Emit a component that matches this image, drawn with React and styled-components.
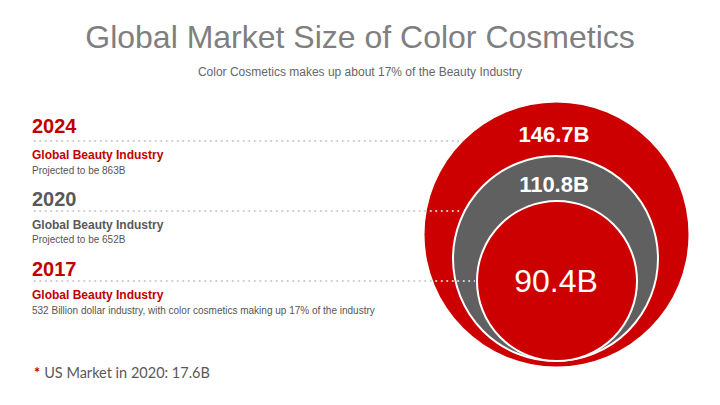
import React from "react";
import styled, { createGlobalStyle } from "styled-components";

const GlobalStyle = createGlobalStyle`
  html, body { margin: 0; padding: 0; background: #ffffff; }
  body { font-family: "Liberation Sans", Arial, sans-serif; }
`;

const RED = "#c00000";
const GRAY_TEXT = "#595959";

const Slide = styled.div`
  width: 720px;
  height: 405px;
  overflow: hidden;
  background: #ffffff;
  display: flex;
  flex-direction: column;
`;

const Header = styled.header`
  padding-top: 21px;
  display: flex;
  flex-direction: column;
  align-items: center;
`;

const Title = styled.h1`
  margin: 0;
  font-family: "Liberation Sans", Arial, sans-serif;
  font-weight: 400;
  font-size: 32px;
  line-height: 32px;
  color: #7f7f7f;
  white-space: nowrap;
`;

const Subtitle = styled.p`
  margin: 12.8px 0 0;
  font-size: 12px;
  line-height: 12px;
  color: #666666;
  white-space: nowrap;
`;

const Main = styled.main`
  margin-top: 23.2px;
  display: flex;
  align-items: flex-start;
`;

const Left = styled.section`
  position: relative;
  z-index: 1;
  width: 424px;
  box-sizing: border-box;
  padding: 15px 0 0 32px;
  display: flex;
  flex-direction: column;
`;

const Entries = styled.div`
  display: flex;
  flex-direction: column;
  gap: 13.5px;
`;

const Entry = styled.div`
  display: flex;
  flex-direction: column;
`;

const Year = styled.div`
  font-size: 20px;
  line-height: 20px;
  font-weight: 700;
  color: ${(p) => (p.$tone === "red" ? RED : GRAY_TEXT)};
`;

const Leader = styled.div`
  width: ${(p) => p.$width}px;
  height: 2px;
  margin-top: ${(p) => p.$gap}px;
  background-image: radial-gradient(
    circle at center,
    rgba(206, 206, 206, 1) 0.7px,
    rgba(206, 206, 206, 0) 1.1px
  );
  background-size: 5.5px 2px;
  background-repeat: repeat-x;
`;

const Name = styled.div`
  margin-top: 7px;
  font-size: 12px;
  line-height: 12px;
  font-weight: 700;
  color: ${(p) => (p.$tone === "red" ? RED : GRAY_TEXT)};
  white-space: nowrap;
`;

const Note = styled.div`
  margin-top: 4.4px;
  font-size: 10px;
  line-height: 10px;
  color: #555555;
  white-space: nowrap;
`;

const Footnote = styled.p`
  margin: 49.6px 0 0 2px;
  font-family: Lato, "Open Sans", sans-serif;
  font-size: 14.5px;
  line-height: 15px;
  color: ${GRAY_TEXT};
  white-space: nowrap;
`;

const Star = styled.span`
  color: ${RED};
  font-weight: 700;
  margin-right: 4px;
`;

const Chart = styled.svg`
  display: block;
  flex-shrink: 0;
  width: 266px;
  height: 268px;
`;

const entries = [
  { year: "2024", tone: "red", leader: 428, gap: 4.4, note: "Projected to be 863B" },
  { year: "2020", tone: "gray", leader: 428, gap: 0.6, note: "Projected to be 652B" },
  {
    year: "2017",
    tone: "red",
    leader: 443,
    gap: 1.6,
    note: "532 Billion dollar industry, with color cosmetics making up 17% of the industry",
  },
];

export default function App() {
  return (
    <>
      <GlobalStyle />
      <Slide>
        <Header>
          <Title>Global Market Size of Color Cosmetics</Title>
          <Subtitle>Color Cosmetics makes up about 17% of the Beauty Industry</Subtitle>
        </Header>
        <Main>
          <Left>
            <Entries>
              {entries.map((e) => (
                <Entry key={e.year}>
                  <Year $tone={e.tone}>{e.year}</Year>
                  <Leader $width={e.leader} $gap={e.gap} />
                  <Name $tone={e.tone}>Global Beauty Industry</Name>
                  <Note>{e.note}</Note>
                </Entry>
              ))}
            </Entries>
            <Footnote>
              <Star>*</Star>US Market in 2020: 17.6B
            </Footnote>
          </Left>
          <Chart viewBox="0 0 266 268">
            <circle cx="132.5" cy="133.5" r="132" fill="#cc0000" />
            <circle cx="131.5" cy="157.5" r="102.5" fill="#606060" stroke="#ffffff" strokeWidth="2" />
            <circle cx="133" cy="180" r="80" fill="#cc0000" stroke="#ffffff" strokeWidth="2" />
            <text
              x="130"
              y="40.7"
              textAnchor="middle"
              fill="#ffffff"
              fontFamily="Liberation Sans, Arial, sans-serif"
              fontWeight="700"
              fontSize="22"
            >
              146.7B
            </text>
            <text
              x="130"
              y="90.7"
              textAnchor="middle"
              fill="#ffffff"
              fontFamily="Liberation Sans, Arial, sans-serif"
              fontWeight="700"
              fontSize="22"
            >
              110.8B
            </text>
            <text
              x="132"
              y="190.7"
              textAnchor="middle"
              fill="#ffffff"
              fontFamily="Liberation Sans, Arial, sans-serif"
              fontSize="32"
            >
              90.4B
            </text>
          </Chart>
        </Main>
      </Slide>
    </>
  );
}
